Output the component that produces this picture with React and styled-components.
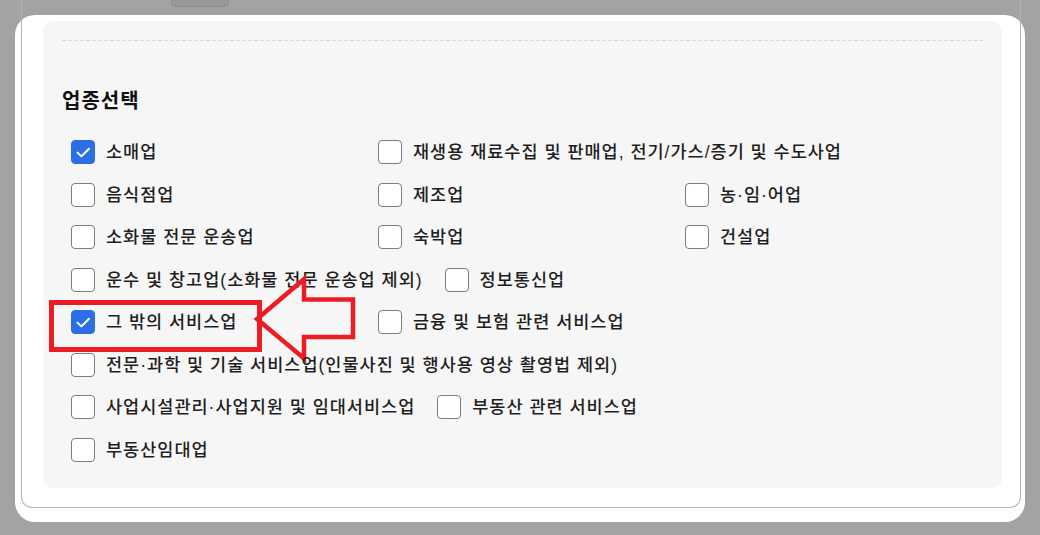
import React from 'react';
import styled, { createGlobalStyle } from 'styled-components';

const GlobalStyle = createGlobalStyle`
  html, body {
    margin: 0;
    padding: 0;
    background: #a3a3a3;
  }
  body {
    font-family: "Noto Sans CJK KR", "Noto Sans", sans-serif;
    color: #1e1e1e;
  }
  * {
    box-sizing: border-box;
  }
`;

const industries = [
  { label: '소매업', checked: true },
  { label: '재생용 재료수집 및 판매업, 전기/가스/증기 및 수도사업' },
  { label: '음식점업' },
  { label: '제조업' },
  { label: '농·임·어업' },
  { label: '소화물 전문 운송업' },
  { label: '숙박업' },
  { label: '건설업' },
  { label: '운수 및 창고업(소화물 전문 운송업 제외)' },
  { label: '정보통신업' },
  { label: '그 밖의 서비스업', checked: true, highlight: true },
  { label: '금융 및 보험 관련 서비스업' },
  { label: '전문·과학 및 기술 서비스업(인물사진 및 행사용 영상 촬영법 제외)' },
  { label: '사업시설관리·사업지원 및 임대서비스업' },
  { label: '부동산 관련 서비스업' },
  { label: '부동산임대업' },
];

const Modal = () => {
  return (
    <>
      <GlobalStyle />
      <Card>
        <Frame>
          <TabButton />
          <Panel>
            <Divider />
            <Heading>업종선택</Heading>
            <OptionList>
              {industries.map((item) => (
                <Option key={item.label} $highlight={item.highlight}>
                  <Box $checked={item.checked}>
                    {item.checked && (
                      <svg width="24" height="24" viewBox="0 0 24 24">
                        <path d="M6.5 12.6 L10.4 16.4 L18 8.8" fill="none" stroke="#fff" strokeWidth="2" strokeLinecap="round" strokeLinejoin="round" />
                      </svg>
                    )}
                  </Box>
                  <Label>{item.label}</Label>
                  {item.highlight && (
                    <Arrow width="106" height="90" viewBox="0 0 106 90">
                      <path d="M6 45 L53 5.2 L53 25.5 L102 25.5 L102 63 L53 63 L53 84.5 Z" fill="none" stroke="#ed1c24" strokeWidth="4.5" strokeLinejoin="miter" strokeMiterlimit="10" />
                    </Arrow>
                  )}
                </Option>
              ))}
            </OptionList>
          </Panel>
        </Frame>
      </Card>
    </>
  );
};

const Card = styled.div`
  display: flex;
  flex-direction: column;

  margin: 15px 15px 0 15px;
  height: 507px;
  padding: 0 4px 14px 6px;
  background: #ffffff;
  border-radius: 20px;
`;

const Frame = styled.div`
  display: flex;
  flex-direction: column;

  margin-top: -15px;
  height: 508px;
  padding: 0 18px 0 21px;

  border: 1px solid #b4b4b4;
  border-top: none;
  border-radius: 0 0 11px 11px;
`;

const TabButton = styled.div`
  margin-left: 128px;
  width: 58px;
  height: 7px;
  background: #999999;

  border: 1px solid #8b8b8b;
  border-top: none;
  border-radius: 0 0 5px 5px;
`;

const Panel = styled.div`
  position: relative;

  margin-top: 14px;
  padding: 19px 19px 26.5px;
  background: #f6f6f6;

  border-radius: 10px;
`;

const Divider = styled.div`
  height: 1px;
  background-image: repeating-linear-gradient(90deg, #d9d9d9 0 4px, transparent 4px 6px);
`;

const Heading = styled.h3`
  margin: 44px 0 0;

  font-size: 20px;
  font-weight: 700;
  line-height: 30px;
  letter-spacing: 1px;
  color: #111111;
`;

const OptionList = styled.div`
  display: flex;
  flex-wrap: wrap;
  column-gap: 22px;
  row-gap: 18.5px;

  margin-top: 25px;
  padding-left: 9px;
`;

const Option = styled.label`
  position: relative;

  display: flex;
  align-items: center;
  gap: 11px;

  min-width: 285px;
  height: 24px;

  ${({ $highlight }) =>
    $highlight &&
    `
    &::before {
      content: '';
      position: absolute;
      left: -22.5px;
      top: -10.5px;
      width: 203px;
      height: 42px;
      border: 5px solid #ed1c24;
    }
  `}
`;

const Box = styled.span`
  flex: none;

  width: 24px;
  height: 24px;
  background: ${({ $checked }) => ($checked ? '#2b6ee6' : '#ffffff')};

  border: 1px solid ${({ $checked }) => ($checked ? '#2b6ee6' : '#7c7c7c')};
  border-radius: 4px;

  svg {
    display: block;
    margin: -1px;
  }
`;

const Label = styled.span`
  font-family: "Liberation Sans", "Noto Sans CJK KR", sans-serif;
  font-size: 17.5px;
  font-weight: 500;
  line-height: 24px;
  letter-spacing: 1px;
  color: #1e1e1e;
  white-space: nowrap;
`;

const Arrow = styled.svg`
  position: absolute;
  left: 180px;
  top: -36px;
`;

export default Modal;
